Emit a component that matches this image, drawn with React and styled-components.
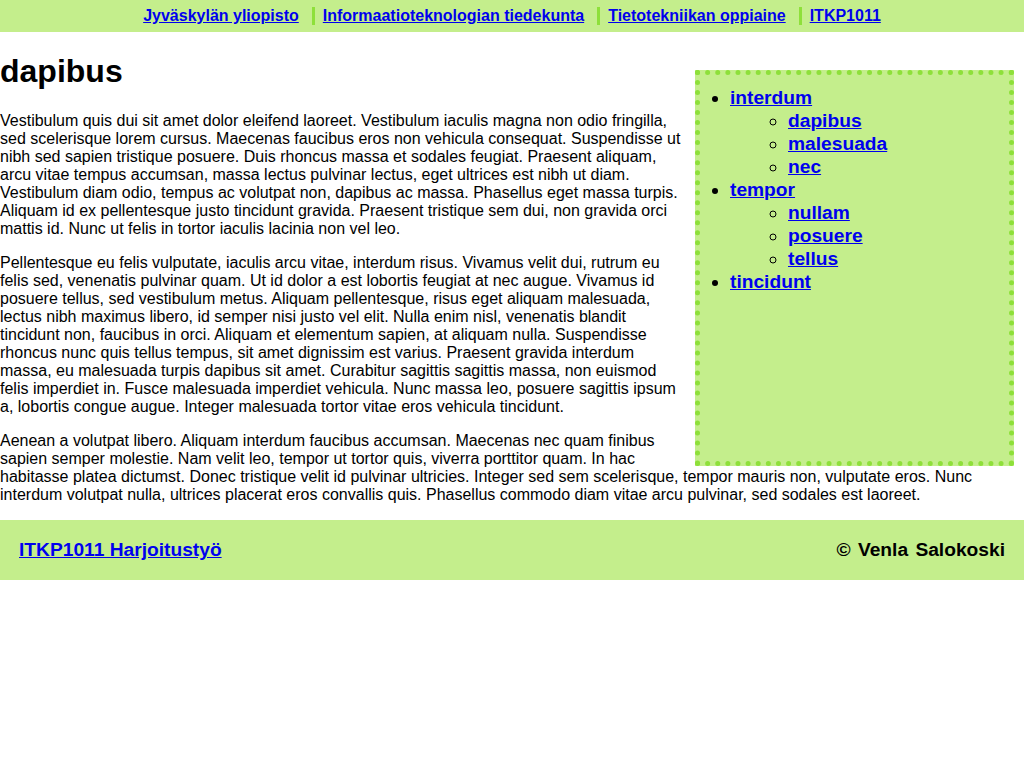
import React from "react";
import styled, { createGlobalStyle } from "styled-components";

const Global = createGlobalStyle`
  html, body { margin: 0; padding: 0; background: #fff; }
  body { font-family: "Liberation Sans", Arial, sans-serif; font-size: 16px; color: #000; }
  a { color: #0000ee; }
`;

const TopNav = styled.nav`
  background: #c4ee8c;
  height: 32px;
  display: flex;
  align-items: center;
  justify-content: center;
`;

const NavList = styled.ul`
  list-style: none;
  margin: 0;
  padding: 0;
  display: flex;
  align-items: center;
`;

const NavItem = styled.li`
  font-weight: bold;
  font-size: 16px;
  line-height: 18px;
  & + & {
    border-left: 3px solid #8ee03a;
    margin-left: 13px;
    padding-left: 8px;
  }
`;

const Main = styled.main`
  display: flow-root;
`;

const Aside = styled.aside`
  float: right;
  box-sizing: border-box;
  width: 319px;
  height: 396px;
  margin: 38px 10px 0 10px;
  background: #c4ee8c;
  border: 5px dotted #8ee03a;
`;

const MenuList = styled.ul`
  margin: ${(p) => (p.$nested ? "0" : "11px 0")};
  padding-left: ${(p) => (p.$nested ? "58px" : "30px")};
  list-style-type: ${(p) => (p.$nested ? "circle" : "disc")};
  font-weight: bold;
  font-size: ${(p) => (p.$nested ? "inherit" : "19.2px")};
  line-height: 23px;
`;

const Heading = styled.h1`
  font-size: 32px;
  margin: 21.44px 0;
`;

const Para = styled.p`
  margin: 16px 0;
  line-height: 18px;
`;

const Footer = styled.footer`
  background: #c4ee8c;
  height: 60px;
  display: flex;
  align-items: center;
  justify-content: space-between;
  padding: 0 19px;
  font-weight: bold;
  font-size: 19.2px;
`;

const Copy = styled.span`
  word-spacing: 2px;
`;

const menu = [
  { t: "interdum", sub: ["dapibus", "malesuada", "nec"] },
  { t: "tempor", sub: ["nullam", "posuere", "tellus"] },
  { t: "tincidunt", sub: [] },
];

export default function App() {
  return (
    <>
      <Global />
      <TopNav>
        <NavList>
          <NavItem><a href="#">Jyväskylän yliopisto</a></NavItem>
          <NavItem><a href="#">Informaatioteknologian tiedekunta</a></NavItem>
          <NavItem><a href="#">Tietotekniikan oppiaine</a></NavItem>
          <NavItem><a href="#">ITKP1011</a></NavItem>
        </NavList>
      </TopNav>
      <Main>
        <Aside>
          <MenuList>
            {menu.map((m) => (
              <li key={m.t}>
                <a href="#">{m.t}</a>
                {m.sub.length > 0 && (
                  <MenuList $nested>
                    {m.sub.map((s) => (
                      <li key={s}><a href="#">{s}</a></li>
                    ))}
                  </MenuList>
                )}
              </li>
            ))}
          </MenuList>
        </Aside>
        <Heading>dapibus</Heading>
        <Para>
          Vestibulum quis dui sit amet dolor eleifend laoreet. Vestibulum iaculis magna non odio fringilla, sed scelerisque lorem cursus. Maecenas faucibus eros non vehicula consequat. Suspendisse ut nibh sed sapien tristique posuere. Duis rhoncus massa et sodales feugiat. Praesent aliquam, arcu vitae tempus accumsan, massa lectus pulvinar lectus, eget ultrices est nibh ut diam. Vestibulum diam odio, tempus ac volutpat non, dapibus ac massa. Phasellus eget massa turpis. Aliquam id ex pellentesque justo tincidunt gravida. Praesent tristique sem dui, non gravida orci mattis id. Nunc ut felis in tortor iaculis lacinia non vel leo.
        </Para>
        <Para>
          Pellentesque eu felis vulputate, iaculis arcu vitae, interdum risus. Vivamus velit dui, rutrum eu felis sed, venenatis pulvinar quam. Ut id dolor a est lobortis feugiat at nec augue. Vivamus id posuere tellus, sed vestibulum metus. Aliquam pellentesque, risus eget aliquam malesuada, lectus nibh maximus libero, id semper nisi justo vel elit. Nulla enim nisl, venenatis blandit tincidunt non, faucibus in orci. Aliquam et elementum sapien, at aliquam nulla. Suspendisse rhoncus nunc quis tellus tempus, sit amet dignissim est varius. Praesent gravida interdum massa, eu malesuada turpis dapibus sit amet. Curabitur sagittis sagittis massa, non euismod felis imperdiet in. Fusce malesuada imperdiet vehicula. Nunc massa leo, posuere sagittis ipsum a, lobortis congue augue. Integer malesuada tortor vitae eros vehicula tincidunt.
        </Para>
        <Para>
          Aenean a volutpat libero. Aliquam interdum faucibus accumsan. Maecenas nec quam finibus sapien semper molestie. Nam velit leo, tempor ut tortor quis, viverra porttitor quam. In hac habitasse platea dictumst. Donec tristique velit id pulvinar ultricies. Integer sed sem scelerisque, tempor mauris non, vulputate eros. Nunc interdum volutpat nulla, ultrices placerat eros convallis quis. Phasellus commodo diam vitae arcu pulvinar, sed sodales est laoreet.
        </Para>
      </Main>
      <Footer>
        <a href="#">ITKP1011 Harjoitustyö</a>
        <Copy>© Venla Salokoski</Copy>
      </Footer>
    </>
  );
}
